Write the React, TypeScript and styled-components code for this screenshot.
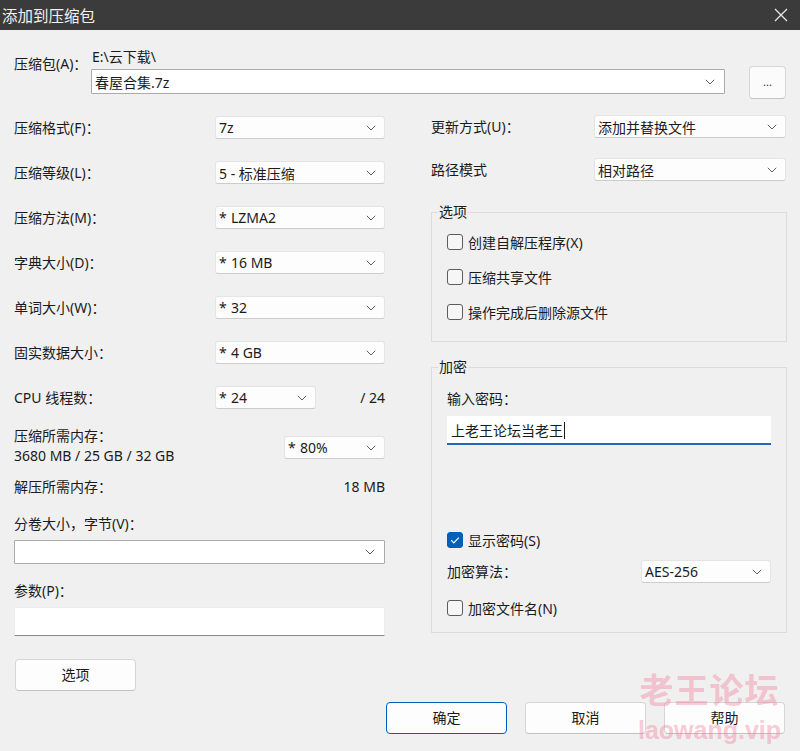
import React from "react";
import styled, { createGlobalStyle } from "styled-components";

const GlobalStyle = createGlobalStyle`
  html, body {
    margin: 0;
    padding: 0;
    background: #f0f0f0;
  }
  body {
    font-family: "Noto Sans", "Noto Sans CJK SC", sans-serif;
    font-size: 14px;
    color: #1b1b1b;
  }
  * {
    box-sizing: border-box;
  }
`;

const Window = styled.div`
  position: relative;
  width: 800px;
  height: 751px;
  background: #f0f0f0;
  overflow: hidden;
`;

const TitleBar = styled.div`
  height: 30px;
  background: #3b3b3b;
  color: #f2f2f2;
  display: flex;
  align-items: center;
  justify-content: space-between;
  padding: 0 12px 0 2px;
  font-size: 15.5px;
`;

const Body = styled.div`
  padding: 0 14px;
`;

const ArchiveRow = styled.div`
  display: flex;
  align-items: flex-start;
  margin-top: 18px;
`;

const ArchiveLabel = styled.div`
  width: 77px;
  padding-top: 7px;
  line-height: 18px;
`;

const ArchiveMiddle = styled.div`
  width: 634px;
  display: flex;
  flex-direction: column;
`;

const PathText = styled.div`
  height: 18px;
  line-height: 18px;
  padding-left: 1px;
`;

const EditCombo = styled.div<{ $h: number; $mt: number }>`
  height: ${(p) => p.$h}px;
  margin-top: ${(p) => p.$mt}px;
  background: #fff;
  border: 1px solid #ababab;
  border-radius: 1px;
  display: flex;
  align-items: center;
  justify-content: space-between;
  padding: 0 9px 0 3px;
`;

const BrowseButton = styled.div`
  width: 37px;
  height: 33px;
  margin: 18px 0 0 24px;
  background: #fbfbfb;
  border: 1px solid #d6d6d6;
  border-bottom-color: #c4c4c4;
  border-radius: 4px;
  display: flex;
  align-items: center;
  justify-content: center;
  font-size: 11px;
  color: #333;
  padding-bottom: 2px;
`;

const Columns = styled.div`
  display: grid;
  grid-template-columns: 371px 356px;
  column-gap: 46px;
  margin-top: 17px;
  align-items: start;
`;

const LeftColumn = styled.div`
  display: flex;
  flex-direction: column;
`;

const FieldStack = styled.div<{ $gap: number }>`
  display: flex;
  flex-direction: column;
  gap: ${(p) => p.$gap}px;
`;

const FieldRow = styled.div`
  display: flex;
  align-items: center;
  height: 23px;
`;

const FieldLabel = styled.div<{ $w: number }>`
  width: ${(p) => p.$w}px;
  flex-shrink: 0;
  line-height: 20px;
  white-space: nowrap;
`;

const Select = styled.div<{ $w: number }>`
  width: ${(p) => p.$w}px;
  height: 23px;
  flex-shrink: 0;
  background: #fdfdfd;
  border: 1px solid #e4e4e4;
  border-bottom-color: #cccccc;
  border-radius: 3px;
  display: flex;
  align-items: center;
  justify-content: space-between;
  padding: 0 8px 0 3px;
  white-space: nowrap;
`;

const Star = styled.span`
  display: inline-block;
  width: 12px;
`;

const SideValue = styled.div`
  flex: 1;
  text-align: right;
  line-height: 20px;
`;

const MemoryRow = styled.div`
  display: flex;
  justify-content: space-between;
  align-items: flex-start;
  margin-top: 17px;
`;

const TextBlock = styled.div`
  line-height: 20px;
  white-space: nowrap;
`;

const MemorySelect = styled(Select)`
  margin-top: 10px;
`;

const InfoRow = styled.div<{ $mt: number }>`
  display: flex;
  justify-content: space-between;
  line-height: 20px;
  margin-top: ${(p) => p.$mt}px;
`;

const PlainLabel = styled.div<{ $mt: number }>`
  line-height: 20px;
  margin-top: ${(p) => p.$mt}px;
`;

const ParamInput = styled.div`
  height: 29px;
  margin-top: 6px;
  background: #fff;
  border: 1px solid #ececec;
  border-bottom: 1px solid #8a8a8a;
  border-radius: 2px 2px 0 0;
`;

const PushButton = styled.div<{ $primary?: boolean }>`
  width: 121px;
  height: 32px;
  flex-shrink: 0;
  background: #fdfdfd;
  border: 1px solid ${(p) => (p.$primary ? "#005fb8" : "#d6d6d6")};
  border-bottom-color: ${(p) => (p.$primary ? "#005fb8" : "#c2c2c2")};
  border-radius: 4px;
  display: flex;
  align-items: center;
  justify-content: center;
  line-height: 20px;
`;

const OptionsButton = styled(PushButton)`
  margin: 23px 0 0 1px;
`;

const RightColumn = styled.div`
  display: flex;
  flex-direction: column;
  margin-top: -1px;
`;

const Group = styled.fieldset<{ $mt: number; $pad: string }>`
  margin: ${(p) => p.$mt}px 0 0 0;
  padding: ${(p) => p.$pad};
  border: 1px solid #dcdcdc;
  min-width: 0;
  display: flex;
  flex-direction: column;
`;

const GroupTitle = styled.legend`
  margin-left: -9px;
  padding: 0 1px;
  line-height: 18px;
  font-size: 14px;
`;

const CheckRow = styled.div<{ $mt?: number }>`
  display: flex;
  align-items: center;
  gap: 5px;
  height: 18px;
  margin-top: ${(p) => p.$mt ?? 0}px;
  white-space: nowrap;
`;

const CheckBoxBox = styled.div<{ $checked?: boolean }>`
  width: 16px;
  height: 16px;
  border-radius: 3px;
  border: 1px solid ${(p) => (p.$checked ? "#005fb8" : "#5c5c5c")};
  background: ${(p) => (p.$checked ? "#005fb8" : "#f6f6f6")};
  display: flex;
  align-items: center;
  justify-content: center;
`;

const PasswordLabel = styled.div`
  line-height: 18px;
`;

const PasswordInput = styled.div`
  height: 29px;
  margin-top: 8px;
  background: #fff;
  border-bottom: 2px solid #1f69b8;
  display: flex;
  align-items: center;
  padding: 1px 0 0 4px;
  font-size: 14px;
`;

const Caret = styled.span`
  display: inline-block;
  width: 1px;
  height: 17px;
  background: #1b1b1b;
  margin-left: 1px;
`;

const AlgoRow = styled(FieldRow)`
  margin-top: 11px;
`;

const ButtonBar = styled.div`
  display: flex;
  justify-content: flex-end;
  gap: 18px;
  margin: 11px 1px 0 0;
`;

const Watermark = styled.div`
  position: absolute;
  left: 638px;
  top: 668px;
  display: flex;
  flex-direction: column;
  align-items: center;
  color: rgba(240, 120, 152, 0.4);
  font-weight: 700;
  pointer-events: none;
`;

const WatermarkCn = styled.div`
  font-family: "Noto Sans CJK SC", sans-serif;
  font-size: 34px;
  line-height: 42px;
  letter-spacing: 1px;
`;

const WatermarkEn = styled.div`
  font-family: "Liberation Sans", Arial, sans-serif;
  font-size: 25px;
  line-height: 30px;
  margin-top: 5px;
`;

const Chevron = () => (
  <svg width="10" height="6" viewBox="0 0 10 6">
    <path d="M0.8 0.8 L5 5 L9.2 0.8" fill="none" stroke="#5f5f5f" strokeWidth="1" />
  </svg>
);

const CloseIcon = () => (
  <svg width="14" height="14" viewBox="0 0 14 14">
    <path d="M1 1 L13 13 M13 1 L1 13" stroke="#e8e8e8" strokeWidth="1.3" />
  </svg>
);

const Combo = ({ w, value, star }: { w: number; value: string; star?: boolean }) => (
  <Select $w={w}>
    <span>
      {star && <Star>*</Star>}
      {value}
    </span>
    <Chevron />
  </Select>
);

const CheckBox = ({ label, checked, mt }: { label: string; checked?: boolean; mt?: number }) => (
  <CheckRow $mt={mt}>
    <CheckBoxBox $checked={checked}>
      {checked && (
        <svg width="12" height="12" viewBox="0 0 12 12">
          <path d="M2.2 6.2 L4.8 8.8 L9.8 3.6" fill="none" stroke="#fff" strokeWidth="1.2" />
        </svg>
      )}
    </CheckBoxBox>
    <span>{label}</span>
  </CheckRow>
);

const leftRows = [
  { label: "压缩格式(F)：", value: "7z" },
  { label: "压缩等级(L)：", value: "5 - 标准压缩" },
  { label: "压缩方法(M)：", value: "LZMA2", star: true },
  { label: "字典大小(D)：", value: "16 MB", star: true },
  { label: "单词大小(W)：", value: "32", star: true },
  { label: "固实数据大小：", value: "4 GB", star: true },
];

export default function App() {
  return (
    <Window>
      <GlobalStyle />
      <TitleBar>
        <span>添加到压缩包</span>
        <CloseIcon />
      </TitleBar>
      <Body>
        <ArchiveRow>
          <ArchiveLabel>压缩包(A)：</ArchiveLabel>
          <ArchiveMiddle>
            <PathText>E:\云下载\</PathText>
            <EditCombo $h={25} $mt={3}>
              <span>春屋合集.7z</span>
              <Chevron />
            </EditCombo>
          </ArchiveMiddle>
          <BrowseButton>...</BrowseButton>
        </ArchiveRow>

        <Columns>
          <LeftColumn>
            <FieldStack $gap={22}>
              {leftRows.map((row) => (
                <FieldRow key={row.label}>
                  <FieldLabel $w={201}>{row.label}</FieldLabel>
                  <Combo w={170} value={row.value} star={row.star} />
                </FieldRow>
              ))}
              <FieldRow>
                <FieldLabel $w={201}>CPU 线程数：</FieldLabel>
                <Combo w={101} value="24" star />
                <SideValue>/ 24</SideValue>
              </FieldRow>
            </FieldStack>

            <MemoryRow>
              <TextBlock>
                压缩所需内存：
                <br />
                3680 MB / 25 GB / 32 GB
              </TextBlock>
              <MemorySelect $w={101}>
                <span>
                  <Star>*</Star>80%
                </span>
                <Chevron />
              </MemorySelect>
            </MemoryRow>

            <InfoRow $mt={11}>
              <span>解压所需内存：</span>
              <span>18 MB</span>
            </InfoRow>

            <PlainLabel $mt={17}>分卷大小，字节(V)：</PlainLabel>
            <EditCombo $h={24} $mt={6}>
              <span />
              <Chevron />
            </EditCombo>

            <PlainLabel $mt={17}>参数(P)：</PlainLabel>
            <ParamInput />

            <OptionsButton>选项</OptionsButton>
          </LeftColumn>

          <RightColumn>
            <FieldStack $gap={20}>
              <FieldRow>
                <FieldLabel $w={163}>更新方式(U)：</FieldLabel>
                <Combo w={192} value="添加并替换文件" />
              </FieldRow>
              <FieldRow>
                <FieldLabel $w={163}>路径模式</FieldLabel>
                <Combo w={192} value="相对路径" />
              </FieldRow>
            </FieldStack>

            <Group $mt={22} $pad="12px 15px 20px">
              <GroupTitle>选项</GroupTitle>
              <CheckBox label="创建自解压程序(X)" />
              <CheckBox label="压缩共享文件" mt={17} />
              <CheckBox label="操作完成后删除源文件" mt={17} />
            </Group>

            <Group $mt={16} $pad="14px 15px 15px">
              <GroupTitle>加密</GroupTitle>
              <PasswordLabel>输入密码：</PasswordLabel>
              <PasswordInput>
                上老王论坛当老王
                <Caret />
              </PasswordInput>
              <CheckBox label="显示密码(S)" checked mt={86} />
              <AlgoRow>
                <FieldLabel $w={194}>加密算法：</FieldLabel>
                <Combo w={130} value="AES-256" />
              </AlgoRow>
              <CheckBox label="加密文件名(N)" mt={16} />
            </Group>
          </RightColumn>
        </Columns>

        <ButtonBar>
          <PushButton $primary>确定</PushButton>
          <PushButton>取消</PushButton>
          <PushButton>帮助</PushButton>
        </ButtonBar>
      </Body>
      <Watermark>
        <WatermarkCn>老王论坛</WatermarkCn>
        <WatermarkEn>laowang.vip</WatermarkEn>
      </Watermark>
    </Window>
  );
}
